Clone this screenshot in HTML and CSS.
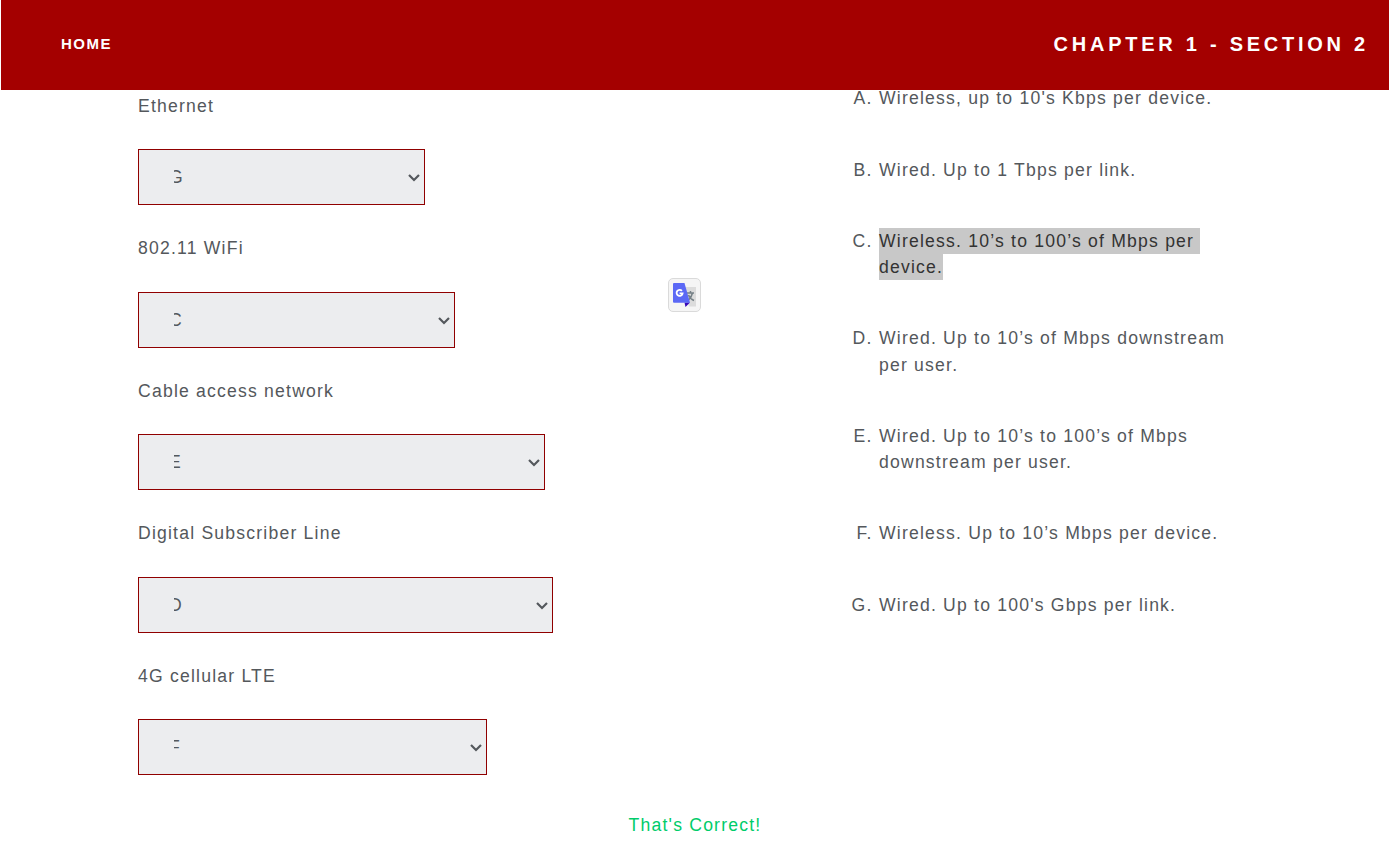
FILE: index.html
```html
<!DOCTYPE html>
<html lang="en">
<head>
<meta charset="utf-8">
<title>Chapter 1 - Section 2</title>
<link rel="stylesheet" href="styles.css">
</head>
<body>
<header class="topbar">
  <a class="home">HOME</a>
  <h1 class="chapter">CHAPTER 1 - SECTION 2</h1>
</header>
<main class="quiz">
  <section class="questions">
    <div class="question"><label class="label">Ethernet</label><select class="choice w-ethernet"><option>G</option></select></div>
    <div class="question"><label class="label">802.11 WiFi</label><select class="choice w-wifi"><option>C</option></select></div>
    <div class="question"><label class="label">Cable access network</label><select class="choice w-cable"><option>E</option></select></div>
    <div class="question"><label class="label">Digital Subscriber Line</label><select class="choice w-dsl"><option>D</option></select></div>
    <div class="question"><label class="label">4G cellular LTE</label><select class="choice w-lte"><option>F</option></select></div>
  </section>
  <ol class="answers">
    <li><span class="letter">A.</span><p>Wireless, up to 10's Kbps per device.</p></li>
    <li><span class="letter">B.</span><p>Wired. Up to 1 Tbps per link.</p></li>
    <li><span class="letter">C.</span><p><span class="selected">Wireless. 10’s to 100’s of Mbps per&nbsp;<br>device.</span></p></li>
    <li><span class="letter">D.</span><p>Wired. Up to 10’s of Mbps downstream<br>per user.</p></li>
    <li><span class="letter">E.</span><p>Wired. Up to 10’s to 100’s of Mbps<br>downstream per user.</p></li>
    <li><span class="letter">F.</span><p>Wireless. Up to 10’s Mbps per device.</p></li>
    <li><span class="letter">G.</span><p>Wired. Up to 100's Gbps per link.</p></li>
  </ol>
</main>
<p class="result">That's Correct!</p>
<div class="translate">
  <svg class="translate-icon" width="24" height="25" viewBox="0 0 24 25">
    <path d="M9 4h14v19.500H16z" fill="#dcdcdc"/>
    <path d="M14 10h7M17.500 8v2M19.500 10c-.8 3.500-2 5.500-4.500 7.500M15.500 12c1 2.500 2.500 4.300 5.500 5.500" fill="none" stroke="#758086" stroke-width="1.500"/>
    <path d="M11.500 19.500H17L12.500 24z" fill="#3709b8"/>
    <path d="M1 0h10.500L17 19.700H1q-1 0-1-1V1q0-1 1-1z" fill="#5b68f5"/>
    <path d="M8.900 7.900A3 3 0 1 0 9.600 10.300H6.600" fill="none" stroke="#fff" stroke-width="1.800"/>
  </svg>
</div>
</body>
</html>
```
FILE: styles.css
```css
* { box-sizing: border-box; }
body {
  margin: 0;
  height: 848px;
  overflow: hidden;
  background: #fff;
  color: #54585c;
  font: 17.6px/26.4px "Liberation Sans", Arial, sans-serif;
  letter-spacing: 1.2px;
}
p { margin: 0; }
.topbar {
  display: flex;
  align-items: center;
  justify-content: space-between;
  height: 90px;
  margin: 0 1px;
  padding: 0 20px 2px 60px;
  background: #a40000;
  color: #fff;
}
.home { font-size: 15px; font-weight: 700; letter-spacing: 1.5px; }
.chapter { margin: 0; font-size: 20px; letter-spacing: 3.75px; }
.quiz { display: flex; height: 709px; padding-left: 138px; }
.questions { width: 706px; padding-top: 2.7px; }
.question { height: 142.5px; }
.label { display: block; height: 56.7px; }
.choice {
  display: block;
  height: 56px;
  padding: 0 0 0 35px;
  border: 1px solid #900000;
  border-radius: 0;
  appearance: none;
  background: #ecedef url("data:image/svg+xml,%3Csvg xmlns='http://www.w3.org/2000/svg' width='12' height='8'%3E%3Cpath d='M1 1l5 5 5-5' fill='none' stroke='%2354585c' stroke-width='2.2'/%3E%3C/svg%3E") no-repeat right 4px top 24px;
  color: #54585c;
  font: inherit;
  letter-spacing: inherit;
  text-indent: -5px;
  outline: 0;
}
.w-ethernet { width: 287px; }
.w-wifi { width: 317px; }
.w-cable { width: 407px; }
.w-dsl { width: 415px; }
.w-lte { width: 349px; }
.answers { margin: -4.6px 0 0; padding: 0; list-style: none; }
.answers li { display: flex; margin-bottom: 44.75px; }
.letter { width: 35px; padding-right: 6.5px; text-align: right; white-space: nowrap; }
.selected { padding: 3px 0; background: #c8c8c8; color: #333; }
.result { padding-top: 13px; color: #00cc6a; text-align: center; }
.translate {
  position: absolute;
  left: 668px;
  top: 278px;
  display: flex;
  width: 33px;
  height: 34px;
  padding: 4px;
  border: 1px solid #dadada;
  border-radius: 5px;
  background: #f5f5f5;
}
.translate-icon { flex: none; }
```
